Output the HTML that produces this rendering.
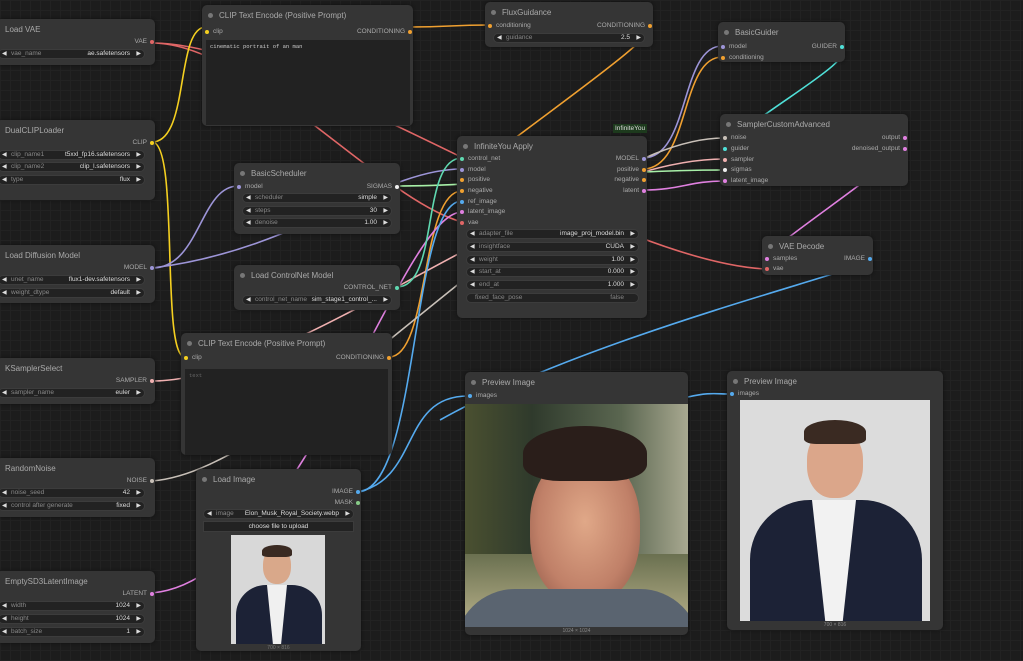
<!DOCTYPE html>
<html><head><meta charset="utf-8"><style>
*{box-sizing:border-box;margin:0;padding:0}
body{width:1023px;height:661px;overflow:hidden;background:#1c1c1c;font-family:"Liberation Sans",sans-serif;position:relative;
background-image:linear-gradient(#222 1px,transparent 1px),linear-gradient(90deg,#222 1px,transparent 1px);background-size:10px 10px}
svg.w{position:absolute;left:0;top:0;z-index:1}
.n{position:absolute;background:#353535;border-radius:5px;z-index:2;box-shadow:0 0 3px #111}
.t{position:absolute;left:17px;top:6px;font-size:8px;color:#aaa;white-space:nowrap}
.t.nd{left:5px}
.t:not(.nd)::before{content:"";position:absolute;left:-11px;top:2px;width:5px;height:5px;border-radius:50%;background:#777}
.s{position:absolute;font-size:6.5px;color:#aaa;white-space:nowrap;line-height:8px}
.s i{position:absolute;top:2px;width:4px;height:4px;border-radius:50%}
.in{padding-left:9px}.in i{left:1px}
.out{text-align:right;padding-right:8px}.out i{right:1px}
.wd{position:absolute;height:10px;background:#222;border:1px solid #3c3c3c;border-radius:5px;font-size:6.5px;color:#888;line-height:8px;padding:0 14px 0 12px;white-space:nowrap}
.wd::before{content:"◀";position:absolute;left:3px;color:#ddd;font-size:6px}
.wd::after{content:"▶";position:absolute;right:3px;top:0;color:#ddd;font-size:6px}
.wd b{position:absolute;right:14px;font-weight:normal;color:#ddd}
.ta{position:absolute;background:#222;font-family:"Liberation Mono",monospace;font-size:5.5px;color:#ccc;padding:3px 4px}
</style></head><body>
<svg class="w" width="1023" height="661" fill="none" stroke-width="1.6">
<path d="M152,43 C250,43 380,200 462,222" stroke="#e06666"/>
<path d="M152,43 C300,43 600,260 765,269" stroke="#e06666"/>
<path d="M152,142 C190,142 175,27 206,27" stroke="#f5d020"/>
<path d="M152,142 C180,142 160,357 185,357" stroke="#f5d020"/>
<path d="M152,268 C200,268 200,186 238,186" stroke="#9d95d8"/>
<path d="M152,268 C300,250 380,169 462,169" stroke="#9d95d8"/>
<path d="M410,27 C450,27 450,25 489,25" stroke="#f0a030"/>
<path d="M650,24 C670,30 520,130 462,180" stroke="#f0a030"/>
<path d="M389,357 C430,357 420,191 462,191" stroke="#f0a030"/>
<path d="M643,169 C690,169 680,57 722,57" stroke="#f0a030"/>
<path d="M643,158 C690,158 680,46 722,46" stroke="#9d95d8"/>
<path d="M842,46 C860,60 760,110 724,148" stroke="#4fe0d8"/>
<path d="M152,481 C300,470 560,138 724,138" stroke="#c8c0b8"/>
<path d="M152,381 C300,381 550,159 724,159" stroke="#f0b0b0"/>
<path d="M397,186 C500,186 600,170 724,170" stroke="#a8f0a8"/>
<path d="M643,190 C680,190 690,181 724,181" stroke="#e080e0"/>
<path d="M905,138 C920,150 790,230 765,258" stroke="#e080e0"/>
<path d="M152,593 C300,580 400,212 462,212" stroke="#e080e0"/>
<path d="M397,287 C440,287 420,158 462,158" stroke="#5fd8b0"/>
<path d="M357,492 C420,492 410,201 462,201" stroke="#55aaee"/>
<path d="M357,492 C420,480 400,396 468,396" stroke="#55aaee"/>
<path d="M870,258 C900,262 600,330 440,420" stroke="#55aaee"/>
<path d="M688,397 C710,392 715,394 731,394" stroke="#55aaee"/>
</svg>

<div class="n" style="left:-4px;top:19px;width:159px;height:46px"><div class="t nd" style="left:9px">Load VAE</div>
<div class="s out" style="right:0;top:19px">VAE<i style="background:#e06666"></i></div>
<div class="wd" style="left:2px;top:30px;width:147px">vae_name<b>ae.safetensors</b></div></div>

<div class="n" style="left:202px;top:5px;width:211px;height:121px"><div class="t">CLIP Text Encode (Positive Prompt)</div>
<div class="s in" style="left:2px;top:23px">clip<i style="background:#f5d020"></i></div>
<div class="s out" style="right:0;top:23px">CONDITIONING<i style="background:#f0a030"></i></div>
<div class="ta" style="left:4px;top:35px;width:204px;height:85px">cinematic portrait of an  man</div></div>

<div class="n" style="left:485px;top:2px;width:168px;height:45px"><div class="t">FluxGuidance</div>
<div class="s in" style="left:2px;top:20px">conditioning<i style="background:#f0a030"></i></div>
<div class="s out" style="right:0;top:20px">CONDITIONING<i style="background:#f0a030"></i></div>
<div class="wd" style="left:8px;top:31px;width:152px">guidance<b>2.5</b></div></div>

<div class="n" style="left:718px;top:22px;width:127px;height:40px"><div class="t">BasicGuider</div>
<div class="s in" style="left:2px;top:21px">model<i style="background:#9d95d8"></i></div>
<div class="s in" style="left:2px;top:32px">conditioning<i style="background:#f0a030"></i></div>
<div class="s out" style="right:0;top:21px">GUIDER<i style="background:#4fe0d8"></i></div></div>

<div class="n" style="left:-4px;top:120px;width:159px;height:80px"><div class="t nd" style="left:9px">DualCLIPLoader</div>
<div class="s out" style="right:0;top:19px">CLIP<i style="background:#f5d020"></i></div>
<div class="wd" style="left:2px;top:30px;width:147px">clip_name1<b>t5xxl_fp16.safetensors</b></div>
<div class="wd" style="left:2px;top:42px;width:147px">clip_name2<b>clip_l.safetensors</b></div>
<div class="wd" style="left:2px;top:55px;width:147px">type<b>flux</b></div></div>

<div class="n" style="left:234px;top:163px;width:166px;height:71px"><div class="t">BasicScheduler</div>
<div class="s in" style="left:2px;top:20px">model<i style="background:#9d95d8"></i></div>
<div class="s out" style="right:0;top:20px">SIGMAS<i style="background:#eee"></i></div>
<div class="wd" style="left:8px;top:30px;width:150px">scheduler<b>simple</b></div>
<div class="wd" style="left:8px;top:43px;width:150px">steps<b>30</b></div>
<div class="wd" style="left:8px;top:55px;width:150px">denoise<b>1.00</b></div></div>

<div style="position:absolute;left:613px;top:124px;background:#1d3a1d;color:#ddd;font-size:6.5px;padding:1px 2px;z-index:2">InfiniteYou</div>
<div class="n" style="left:457px;top:136px;width:190px;height:182px"><div class="t">InfiniteYou Apply</div>
<div class="s in" style="left:2px;top:19px">control_net<i style="background:#5fd8b0"></i></div>
<div class="s in" style="left:2px;top:30px">model<i style="background:#9d95d8"></i></div>
<div class="s in" style="left:2px;top:40px">positive<i style="background:#f0a030"></i></div>
<div class="s in" style="left:2px;top:51px">negative<i style="background:#f0a030"></i></div>
<div class="s in" style="left:2px;top:62px">ref_image<i style="background:#55aaee"></i></div>
<div class="s in" style="left:2px;top:72px">latent_image<i style="background:#e080e0"></i></div>
<div class="s in" style="left:2px;top:83px">vae<i style="background:#e06666"></i></div>
<div class="s out" style="right:0;top:19px">MODEL<i style="background:#9d95d8"></i></div>
<div class="s out" style="right:0;top:30px">positive<i style="background:#f0a030"></i></div>
<div class="s out" style="right:0;top:40px">negative<i style="background:#f0a030"></i></div>
<div class="s out" style="right:0;top:51px">latent<i style="background:#e080e0"></i></div>
<div class="wd" style="left:9px;top:93px;width:173px">adapter_file<b>image_proj_model.bin</b></div>
<div class="wd" style="left:9px;top:106px;width:173px">insightface<b>CUDA</b></div>
<div class="wd" style="left:9px;top:119px;width:173px">weight<b>1.00</b></div>
<div class="wd" style="left:9px;top:131px;width:173px">start_at<b>0.000</b></div>
<div class="wd" style="left:9px;top:144px;width:173px">end_at<b>1.000</b></div>
<div style="position:absolute;left:9px;top:157px;width:173px;height:10px;background:#222;border:1px solid #3c3c3c;border-radius:5px;font-size:6.5px;color:#888;line-height:8px;padding-left:8px">fixed_face_pose<span style="position:absolute;right:14px">false</span></div></div>

<div class="n" style="left:720px;top:114px;width:188px;height:72px"><div class="t">SamplerCustomAdvanced</div>
<div class="s in" style="left:2px;top:20px">noise<i style="background:#c8c0b8"></i></div>
<div class="s in" style="left:2px;top:31px">guider<i style="background:#4fe0d8"></i></div>
<div class="s in" style="left:2px;top:42px">sampler<i style="background:#f0b0b0"></i></div>
<div class="s in" style="left:2px;top:52px">sigmas<i style="background:#eee"></i></div>
<div class="s in" style="left:2px;top:63px">latent_image<i style="background:#e080e0"></i></div>
<div class="s out" style="right:0;top:20px">output<i style="background:#e080e0"></i></div>
<div class="s out" style="right:0;top:31px">denoised_output<i style="background:#e080e0"></i></div></div>

<div class="n" style="left:-4px;top:245px;width:159px;height:58px"><div class="t nd" style="left:9px">Load Diffusion Model</div>
<div class="s out" style="right:0;top:19px">MODEL<i style="background:#9d95d8"></i></div>
<div class="wd" style="left:2px;top:30px;width:147px">unet_name<b>flux1-dev.safetensors</b></div>
<div class="wd" style="left:2px;top:43px;width:147px">weight_dtype<b>default</b></div></div>

<div class="n" style="left:234px;top:265px;width:166px;height:45px"><div class="t">Load ControlNet Model</div>
<div class="s out" style="right:0;top:19px">CONTROL_NET<i style="background:#5fd8b0"></i></div>
<div class="wd" style="left:8px;top:30px;width:150px">control_net_name<b style="color:#ddd">sim_stage1_control_...</b></div></div>

<div class="n" style="left:762px;top:236px;width:111px;height:39px"><div class="t">VAE Decode</div>
<div class="s in" style="left:2px;top:19px">samples<i style="background:#e080e0"></i></div>
<div class="s in" style="left:2px;top:29px">vae<i style="background:#e06666"></i></div>
<div class="s out" style="right:0;top:19px">IMAGE<i style="background:#55aaee"></i></div></div>

<div class="n" style="left:181px;top:333px;width:211px;height:122px"><div class="t">CLIP Text Encode (Positive Prompt)</div>
<div class="s in" style="left:2px;top:21px">clip<i style="background:#f5d020"></i></div>
<div class="s out" style="right:0;top:21px">CONDITIONING<i style="background:#f0a030"></i></div>
<div class="ta" style="left:4px;top:36px;width:203px;height:86px;color:#666">text</div></div>

<div class="n" style="left:-4px;top:358px;width:159px;height:46px"><div class="t nd" style="left:9px">KSamplerSelect</div>
<div class="s out" style="right:0;top:19px">SAMPLER<i style="background:#f0b0b0"></i></div>
<div class="wd" style="left:2px;top:30px;width:147px">sampler_name<b>euler</b></div></div>

<div class="n" style="left:-4px;top:458px;width:159px;height:59px"><div class="t nd" style="left:9px">RandomNoise</div>
<div class="s out" style="right:0;top:19px">NOISE<i style="background:#c8c0b8"></i></div>
<div class="wd" style="left:2px;top:30px;width:147px">noise_seed<b>42</b></div>
<div class="wd" style="left:2px;top:43px;width:147px">control after generate<b>fixed</b></div></div>

<div class="n" style="left:-4px;top:571px;width:159px;height:72px"><div class="t nd" style="left:9px">EmptySD3LatentImage</div>
<div class="s out" style="right:0;top:19px">LATENT<i style="background:#e080e0"></i></div>
<div class="wd" style="left:2px;top:30px;width:147px">width<b>1024</b></div>
<div class="wd" style="left:2px;top:43px;width:147px">height<b>1024</b></div>
<div class="wd" style="left:2px;top:56px;width:147px">batch_size<b>1</b></div></div>

<div class="n" style="left:196px;top:469px;width:165px;height:182px"><div class="t">Load Image</div>
<div class="s out" style="right:0;top:19px">IMAGE<i style="background:#55aaee"></i></div>
<div class="s out" style="right:0;top:30px">MASK<i style="background:#8c8"></i></div>
<div class="wd" style="left:7px;top:40px;width:151px">image<b>Elon_Musk_Royal_Society.webp</b></div>
<div style="position:absolute;left:7px;top:52px;width:151px;height:11px;background:#222;border:1px solid #3c3c3c;font-size:6.5px;color:#ddd;text-align:center;line-height:9px">choose file to upload</div>
<div style="position:absolute;left:35px;top:66px;width:94px;height:109px;background:#d8d8d8;overflow:hidden">
<div style="position:absolute;left:32px;top:13px;width:28px;height:36px;border-radius:45%;background:#d9a88a"></div>
<div style="position:absolute;left:31px;top:10px;width:30px;height:12px;border-radius:50% 50% 20% 20%;background:#3a2a22"></div>
<div style="position:absolute;left:5px;top:50px;width:86px;height:70px;border-radius:30px 30px 0 0;background:#1c2236"></div>
<div style="position:absolute;left:36px;top:50px;width:20px;height:60px;background:#f0f0f0;clip-path:polygon(0 0,100% 0,70% 100%,30% 100%)"></div></div>
<div style="position:absolute;left:0;width:165px;top:176px;font-size:5px;color:#777;text-align:center">700 × 816</div></div>

<div class="n" style="left:465px;top:372px;width:223px;height:263px"><div class="t">Preview Image</div>
<div class="s in" style="left:2px;top:20px">images<i style="background:#55aaee"></i></div>
<div style="position:absolute;left:0;top:32px;width:223px;height:223px;overflow:hidden;background:linear-gradient(90deg,#4a5030,#2f3a2c 30%,#5a6650 70%,#a8a890)">
<div style="position:absolute;left:0;top:150px;width:223px;height:80px;background:linear-gradient(#6a7050,#c0b890)"></div>
<div style="position:absolute;left:65px;top:50px;width:110px;height:150px;border-radius:45%;background:radial-gradient(ellipse at 50% 45%,#e0a888,#c08068 60%,#8a5444)"></div>
<div style="position:absolute;left:58px;top:22px;width:124px;height:55px;border-radius:50% 50% 30% 30%;background:#2a1e1a"></div>
<div style="position:absolute;left:-10px;top:185px;width:245px;height:60px;border-radius:60px 60px 0 0;background:#5a6470"></div></div>
<div style="position:absolute;left:0;width:223px;top:256px;font-size:5px;color:#888;text-align:center">1024 × 1024</div></div>

<div class="n" style="left:727px;top:371px;width:216px;height:259px"><div class="t">Preview Image</div>
<div class="s in" style="left:2px;top:19px">images<i style="background:#55aaee"></i></div>
<div style="position:absolute;left:13px;top:29px;width:190px;height:221px;background:#dcdcdc;overflow:hidden">
<div style="position:absolute;left:67px;top:28px;width:56px;height:70px;border-radius:45%;background:#dba68a"></div>
<div style="position:absolute;left:64px;top:20px;width:62px;height:24px;border-radius:50% 50% 20% 20%;background:#3a2a22"></div>
<div style="position:absolute;left:10px;top:100px;width:172px;height:140px;border-radius:60px 60px 0 0;background:#1c2236"></div>
<div style="position:absolute;left:72px;top:100px;width:44px;height:121px;background:#f2f2f2;clip-path:polygon(0 0,100% 0,70% 100%,30% 100%)"></div></div>
<div style="position:absolute;left:0;width:216px;top:251px;font-size:5px;color:#888;text-align:center">700 × 816</div></div>
</body></html>
